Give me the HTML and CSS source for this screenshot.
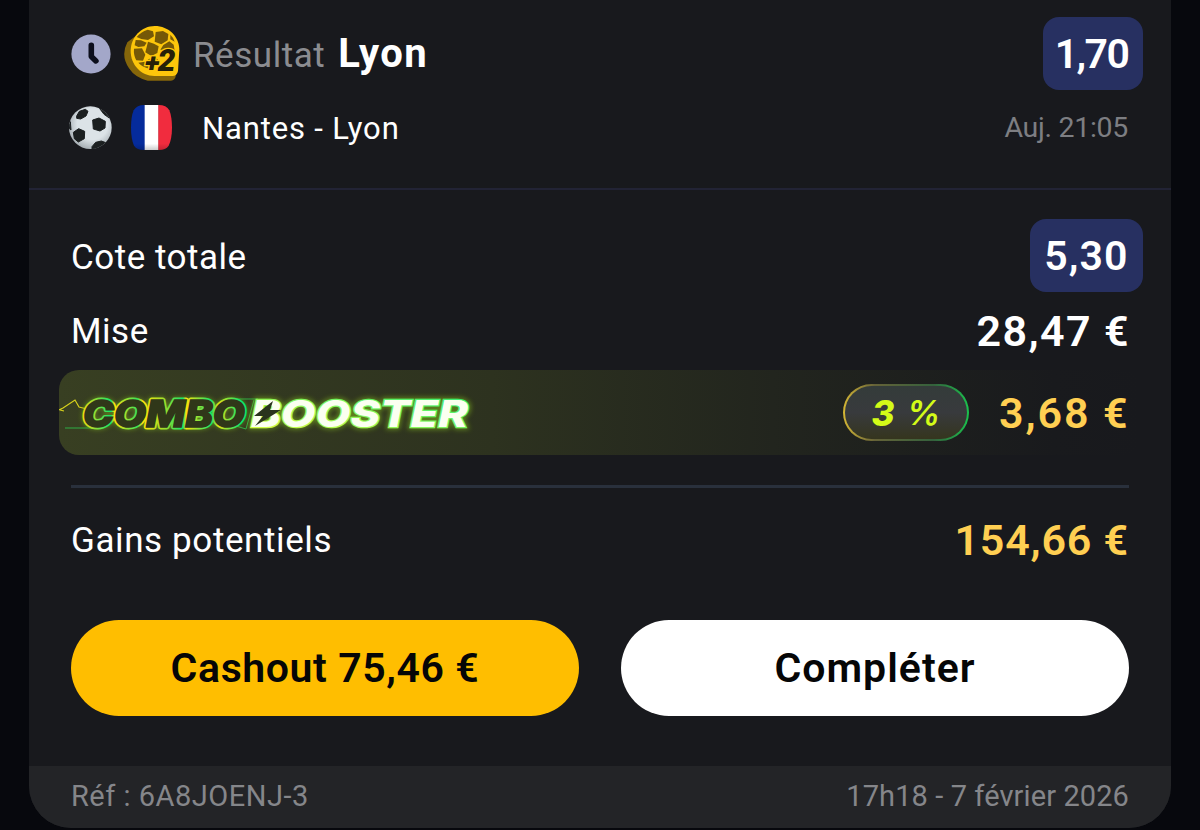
FILE: index.html
```html
<!DOCTYPE html>
<html lang="fr">
<head>
<meta charset="utf-8">
<title>Pari combiné</title>
<link rel="stylesheet" href="styles.css">
</head>
<body>
<main class="ticket">
  <section class="selection">
    <div class="row pick">
      <svg class="clock" viewBox="0 0 40 40"><circle cx="20" cy="20" r="19.6" fill="#a3a7c9"/><path d="M20.3 11.3v11.2l4.6 4.4" fill="none" stroke="#0c0e1c" stroke-width="5.6" stroke-linecap="round" stroke-linejoin="round"/></svg>
      <svg class="boost" viewBox="195 30 168 168">
        <path d="M229 64L205 82Q184 122 210 160Q228 188 266 197H336Q348 196 350 184L355 120Z" fill="#85660a"/>
        <path d="M287 33C330 33 361 65 361 106L357 168Q354 183 340 183H286C246 183 215 149 215 108C215 66 248 33 287 33Z" fill="#fdc60b"/>
        <g fill="#755807">
          <path d="M233 66Q245 51 266 44L282 49L285 64L267 75L247 72Z"/>
          <path d="M290 51L312 48L328 57L326 76L307 88L287 80Z"/>
          <path d="M267 80L285 86L299 94L295 114L277 123L259 112Z"/>
          <path d="M230 75L246 76L263 83L256 94L238 96L227 91Z"/>
          <path d="M225 101L249 100L259 119L252 137L232 136Q223 119 225 101Z"/>
          <path d="M313 90L331 79L344 89L347 107L326 106L304 104Z"/>
          <path d="M334 59Q344 68 347 80L334 73Z"/>
          <path d="M258 140L275 129L291 126L297 136L286 148L271 161Q250 156 238 143Z"/>
        </g>
        <g class="boost-text"><text x="258" y="171" font-size="76" textLength="43" lengthAdjust="spacingAndGlyphs">+</text><text x="296" y="168" font-size="92" textLength="53" lengthAdjust="spacingAndGlyphs">2</text></g>
      </svg>
      <span class="market">Résultat</span><span class="outcome">Lyon</span>
      <span class="odds odds-single push">1,70</span>
    </div>
    <div class="row match">
      <svg class="ball" viewBox="27 269 129 129">
        <defs><radialGradient id="leather" cx=".55" cy=".42" r=".6"><stop offset=".6" stop-color="#dce3e7"/><stop offset="1" stop-color="#a5adb2"/></radialGradient><clipPath id="sphere"><circle cx="91" cy="334" r="64"/></clipPath></defs>
        <circle cx="91" cy="334" r="64" fill="url(#leather)"/>
        <g clip-path="url(#sphere)" fill="#1b1f20" stroke="#1b1f20" stroke-width="3" stroke-linejoin="round">
          <path d="M50 299L58 285L76 279L84 285L78 299L62 308L50 306Z"/><path d="M98 311L117 305L136 315L135 335L120 344L100 338Z"/><path d="M40 348L56 337L74 345L73 367L55 377L43 367Z"/><path d="M96 391L107 378L124 374L140 380L130 398H96Z"/><path d="M117 274Q137 283 148 305L132 294Z"/><path d="M26 335L31 316L33 341Z"/>
        </g>
      </svg>
      <svg class="flag" viewBox="213 269 123 135">
        <defs><clipPath id="flag-shape"><path d="M252 269H296Q319 269 328 285Q336 305 336 337Q336 370 326 391Q317 404 296 404H252Q231 404 222 391Q213 370 213 337Q213 304 221 285Q231 269 252 269Z"/></clipPath><linearGradient id="flag-shade" x2="0" y2="1"><stop offset=".86" stop-color="#000" stop-opacity="0"/><stop offset="1" stop-opacity=".2"/></linearGradient></defs>
        <g clip-path="url(#flag-shape)"><rect x="213" y="269" width="42" height="135" fill="#052b9b"/><rect x="254" y="269" width="42" height="135" fill="#fff"/><rect x="295" y="269" width="42" height="135" fill="#f12c3e"/><rect x="213" y="269" width="123" height="135" fill="url(#flag-shade)"/></g>
      </svg>
      <span class="teams">Nantes - Lyon</span>
      <span class="kickoff push">Auj. 21:05</span>
    </div>
  </section>
  <section class="summary">
    <div class="row total"><span class="label">Cote totale</span><span class="odds odds-total push">5,30</span></div>
    <div class="row stake"><span class="label">Mise</span><span class="amount a-stake push">28,47 €</span></div>
    <div class="row booster">
      <svg class="combo" viewBox="59 385 420 56">
        <defs>
          <linearGradient id="neon" gradientUnits="userSpaceOnUse" x1="81" y1="0" x2="248" y2="0">
            <stop stop-color="#ffd90a"/><stop offset=".18" stop-color="#12e56c"/><stop offset=".2" stop-color="#ffe10a"/><stop offset=".34" stop-color="#35e35a"/><stop offset=".37" stop-color="#ffe10a"/><stop offset=".5" stop-color="#9de02c"/><stop offset=".61" stop-color="#12e56c"/><stop offset=".63" stop-color="#ffe10a"/><stop offset=".78" stop-color="#12e56c"/><stop offset=".82" stop-color="#e4e012"/><stop offset=".95" stop-color="#12e56c"/>
          </linearGradient>
          <linearGradient id="edge" x1="0" y1="1" x2="1" y2="0"><stop stop-color="#e5ff42"/><stop offset="1" stop-color="#24ee78"/></linearGradient>
          <filter id="halo" x="-10%" y="-50%" width="120%" height="200%"><feGaussianBlur stdDeviation="2.5"/></filter>
        </defs>
        <path d="M59 410L63 408L75 400L79 407L87 409M60 410L64 411" fill="none" stroke="#d8d21c" stroke-width="1.2"/>
        <path d="M65 428H92M225 399H258M236 426L246 429L254 400" fill="none" stroke="#2fae45" stroke-width="1"/>
        <text class="logo logo-halo" x="83" y="426.500" textLength="162" lengthAdjust="spacingAndGlyphs" filter="url(#halo)">COMBO</text>
        <text class="logo logo-neon" x="83" y="426.500" textLength="162" lengthAdjust="spacingAndGlyphs">COMBO</text>
        <text class="logo logo-combo" x="83" y="426.500" textLength="162" lengthAdjust="spacingAndGlyphs" aria-hidden="true">COMBO</text>
        <text class="logo logo-halo" x="251" y="426.500" textLength="217" lengthAdjust="spacingAndGlyphs" filter="url(#halo)">BOOSTER</text>
        <text class="logo logo-booster" x="251" y="426.500" textLength="217" lengthAdjust="spacingAndGlyphs">BOOSTER</text>
        <path d="M273 401L254 416H263L255 426L281 410H270L273 401Z" fill="#29341d"/>
      </svg>
      <span class="percent push">3<span class="sign">%</span></span>
      <span class="amount gold a-boost">3,68 €</span>
    </div>
    <hr class="rule">
    <div class="row gains"><span class="label l-gains">Gains potentiels</span><span class="amount gold a-gains push">154,66 €</span></div>
    <div class="actions"><button class="btn cashout">Cashout 75,46 €</button><button class="btn complete">Compléter</button></div>
  </section>
  <footer class="row reference"><span class="ref">Réf : 6A8JOENJ-3</span><span class="date push">17h18 - 7 février 2026</span></footer>
</main>
</body>
</html>
```
FILE: styles.css
```css
* { box-sizing: border-box; }
body { margin: 0; height: 830px; overflow: hidden; background: #07080d; color: #fff; font-family: Roboto, "Liberation Sans", sans-serif; }
.ticket { width: 1142px; height: 828px; margin: 0 29px; overflow: hidden; background: #18191d; border-radius: 0 0 42px 42px; }
.row { display: flex; align-items: center; white-space: nowrap; }
.push { margin-left: auto; }
svg { display: block; flex: none; }
.selection { height: 190px; padding: 17px 28px 0 40px; border-bottom: 2px solid #222335; }
.pick { height: 73px; }
.clock { width: 40px; height: 40px; margin-left: 2px; }
.boost { width: 56px; height: 56px; margin: 0 0 2px 13px; }
.boost-text { font-family: Roboto, sans-serif; font-weight: 900; font-style: italic; fill: #262008; stroke: #fdc60b; stroke-width: 8px; paint-order: stroke; }
.market { margin-left: 13px; padding-top: 4px; color: #8b8c90; font-size: 35px; font-weight: 390; letter-spacing: .55px; }
.outcome { margin-left: 13px; font-size: 40px; font-weight: 680; letter-spacing: 1.4px; }
.odds { display: flex; align-items: center; justify-content: center; height: 73px; border-radius: 16px; background: #273061; font-size: 41px; font-weight: 600; }
.odds-single { width: 100px; padding-right: 3px; letter-spacing: -1.6px; }
.odds-total { width: 113px; letter-spacing: 1.1px; }
.match { height: 74px; }
.ball { width: 43px; height: 43px; }
.flag { width: 41px; height: 45px; margin-left: 19px; }
.teams { margin-left: 30px; padding-top: 2px; font-size: 31px; font-weight: 390; letter-spacing: .85px; }
.kickoff { margin-right: 15px; color: #7d7e82; font-size: 28.5px; font-weight: 390; letter-spacing: -.3px; }
.summary { height: 576px; padding: 29px 0 0; }
.total { height: 73px; padding: 0 28px 0 42px; }
.total .label { padding-top: 3px; }
.stake { height: 78px; padding: 0 41px 0 42px; }
.label { font-size: 35px; font-weight: 390; letter-spacing: .5px; }
.l-gains { letter-spacing: .6px; }
.amount { font-size: 43px; font-weight: 590; }
.a-stake { letter-spacing: 1.4px; }
.gold { color: #ffcf52; }
.booster { height: 85px; margin: 0 30px; padding-right: 10px; border-radius: 20px; background: linear-gradient(90deg, #383f22 0%, #2d321f 40%, #22251e 66%, #191a1d 92%, #18191d 100%); }
.combo { width: 420px; height: 56px; }
.logo { font-family: Inter, sans-serif; font-size: 37px; font-weight: 800; font-style: italic; }
.logo-halo { fill: none; stroke: #80b51c; stroke-width: 5px; opacity: .6; }
.logo-neon { fill: none; stroke: url(#neon); stroke-width: 4.8px; stroke-linejoin: round; }
.logo-combo { fill: #303719; stroke: #303719; stroke-width: 1.6px; }
.logo-booster { fill: #fbfff0; stroke: url(#edge); stroke-width: 2.4px; paint-order: stroke; }
.percent { display: flex; align-items: center; justify-content: center; gap: 12px; width: 126px; height: 57px; border: 2px solid transparent; border-radius: 29px; background: linear-gradient(#343c3a, #383a3d 50%, #35351e) padding-box, linear-gradient(90deg, #d5b735, #656238 25%, #34613c 72%, #1ac24d) border-box; color: #d3fb18; font-family: Inter, sans-serif; font-size: 35px; font-weight: 800; font-style: italic; }
.sign { font-size: 34px; font-weight: 600; }
.a-boost { width: 132px; margin-left: 30px; letter-spacing: 1.9px; }
.rule { height: 3px; margin: 30px 42px 0; border: 0; background: #29303c; }
.gains { height: 105px; padding: 0 42px; }
.gains .amount { padding-bottom: 2px; }
.a-gains { letter-spacing: .8px; }
.actions { display: grid; grid-template-columns: 1fr 1fr; gap: 42px; margin: 27px 42px 0; }
.btn { height: 96px; padding: 0; border: 0; border-radius: 48px; color: #060606; font-family: inherit; font-size: 41px; font-weight: 600; }
.cashout { background: #ffbe00; letter-spacing: .6px; }
.complete { background: #fff; letter-spacing: 1px; }
.reference { height: 62px; padding: 0 42px 3px; background: #232427; color: #85868a; font-size: 29px; font-weight: 390; }
.ref { letter-spacing: .5px; }
.date { letter-spacing: .1px; }
```
